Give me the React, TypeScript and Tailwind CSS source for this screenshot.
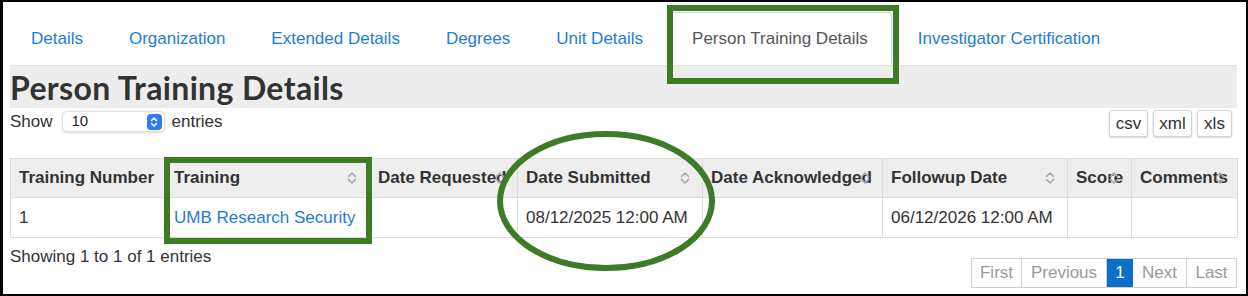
import React from "react";

const GREEN = "#3e7b27";

const SortIcon = () => (
  <svg
    width="12"
    height="16"
    viewBox="0 0 12 16"
    className="absolute right-[11px] top-1/2 -translate-y-1/2"
  >
    <path d="M2.5 6.5 L6 3 L9.5 6.5" fill="none" stroke="#aaaaaa" strokeWidth="1.7" strokeLinecap="round" strokeLinejoin="round" />
    <path d="M2.5 9.5 L6 13 L9.5 9.5" fill="none" stroke="#aaaaaa" strokeWidth="1.7" strokeLinecap="round" strokeLinejoin="round" />
  </svg>
);

const tabs = ["Details", "Organization", "Extended Details", "Degrees", "Unit Details"];

const cols: { label: string; w: string }[] = [
  { label: "Training Number", w: "w-[155px]" },
  { label: "Training", w: "w-[204px]" },
  { label: "Date Requested", w: "w-[148px]" },
  { label: "Date Submitted", w: "w-[185px]" },
  { label: "Date Acknowledged", w: "w-[180px]" },
  { label: "Followup Date", w: "w-[185px]" },
  { label: "Score", w: "w-[64px]" },
  { label: "Comments", w: "w-[106px]" },
];

export default function App() {
  return (
    <div
      className="relative w-[1248px] h-[296px] overflow-hidden bg-white border-black border-t-2 border-r-2 border-b-2 border-l-[3px] box-border pl-[7px] pr-[9px] pt-[10px] text-[#333]"
      style={{ fontFamily: '"Liberation Sans", Arial, sans-serif' }}
    >
      {/* Tabs */}
      <div className="flex h-[53px] items-stretch">
        {tabs.map((t) => (
          <div key={t} className="flex items-center pl-[21px] pr-[23px] mr-[2px] text-[17px] text-[#1f7bd6]">
            {t}
          </div>
        ))}
        <div className="flex items-center pl-[23px] pr-[23px] mr-[2px] text-[17px] text-[#555] bg-white border border-b-0 border-[#cdd9ea] rounded-t-[3px]">
          Person Training Details
        </div>
        <div className="flex items-center pl-[24px] pr-[22px] text-[17px] text-[#1f7bd6]">
          Investigator Certification
        </div>
      </div>

      {/* Heading band */}
      <div className="h-[43px] bg-[#ededed] border-t border-[#e2e2e2] flex items-center">
        <h1
          className="text-[32px] leading-none font-bold tracking-[0.35px] text-[#333] mt-[1px]"
          style={{ fontFamily: 'Lato, "Noto Sans", sans-serif' }}
        >
          Person Training Details
        </h1>
      </div>

      {/* Show entries + export buttons */}
      <div className="flex justify-between items-start mt-[2px]">
        <div className="flex items-center h-[23px] text-[17px]">
          <span>Show</span>
          <div className="ml-[9px] w-[103px] h-[21px] bg-white rounded-[5px] border border-[#e0e0e0] shadow-[0_1px_2px_rgba(0,0,0,0.15)] flex items-center justify-between pl-[9px] pr-[2px]">
            <span className="text-[15px] text-[#222]">10</span>
            <span className="w-[15px] h-[16px] rounded-[4px] bg-[#2f7cf6] flex items-center justify-center">
              <svg width="8" height="12" viewBox="0 0 8 12">
                <path d="M1.5 4.5 L4 2 L6.5 4.5" fill="none" stroke="white" strokeWidth="1.5" strokeLinecap="round" strokeLinejoin="round" />
                <path d="M1.5 7.5 L4 10 L6.5 7.5" fill="none" stroke="white" strokeWidth="1.5" strokeLinecap="round" strokeLinejoin="round" />
              </svg>
            </span>
          </div>
          <span className="ml-[7px]">entries</span>
        </div>
        <div className="flex gap-[5px] mr-[5px]">
          {[
            ["csv", "w-[39px]"],
            ["xml", "w-[39px]"],
            ["xls", "w-[35px]"],
          ].map(([b, w]) => (
            <div
              key={b}
              className={`${w} h-[27px] flex items-center justify-center text-[17px] bg-white border border-[#d2d2d2] rounded-[3px] shadow-[0_1px_2px_rgba(0,0,0,0.18)]`}
            >
              {b}
            </div>
          ))}
        </div>
      </div>

      {/* Table */}
      <table className="mt-[21px] border-collapse table-fixed w-[1227px]">
        <thead>
          <tr className="bg-[#eeeeee] h-[39px]">
            {cols.map((c, i) => (
              <th
                key={c.label}
                className={`${c.w} relative text-left font-bold text-[17px] pl-[8px] pr-0 border border-[#dcdcdc] whitespace-nowrap overflow-visible`}
              >
                {c.label}
                {i > 0 && <SortIcon />}
              </th>
            ))}
          </tr>
        </thead>
        <tbody>
          <tr className="h-[40px] text-[17px]">
            <td className="pl-[8px] border border-[#dcdcdc]">1</td>
            <td className="pl-[8px] border border-[#dcdcdc] text-[#1f7bd6] whitespace-nowrap">UMB Research Security</td>
            <td className="border border-[#dcdcdc]"></td>
            <td className="pl-[8px] border border-[#dcdcdc] whitespace-nowrap">08/12/2025 12:00 AM</td>
            <td className="border border-[#dcdcdc]"></td>
            <td className="pl-[8px] border border-[#dcdcdc] whitespace-nowrap">06/12/2026 12:00 AM</td>
            <td className="border border-[#dcdcdc]"></td>
            <td className="border border-[#dcdcdc]"></td>
          </tr>
        </tbody>
      </table>

      {/* Footer */}
      <div className="flex justify-between items-start mt-[9px]">
        <span className="text-[17px] leading-[20px]">Showing 1 to 1 of 1 entries</span>
        <div className="mt-[11px] flex h-[30px] border border-[#cfcfcf] text-[17px] text-[#9a9a9a]">
          <div className="w-[50px] flex items-center justify-center border-r border-[#cfcfcf]">First</div>
          <div className="w-[85px] flex items-center justify-center border-r border-[#cfcfcf]">Previous</div>
          <div className="w-[26px] flex items-center justify-center bg-[#0b6ec8] text-white">1</div>
          <div className="w-[54px] flex items-center justify-center border-r border-[#cfcfcf]">Next</div>
          <div className="w-[49px] flex items-center justify-center">Last</div>
        </div>
      </div>

      {/* Annotations */}
      <svg
        width="1248"
        height="296"
        className="absolute left-[-3px] top-[-2px] pointer-events-none"
      >
        <rect x="670" y="8" width="226" height="73" fill="none" stroke={GREEN} strokeWidth="6" />
        <rect x="167" y="160" width="202" height="81" fill="none" stroke={GREEN} strokeWidth="6" />
        <ellipse cx="606" cy="201" rx="106" ry="67" fill="none" stroke={GREEN} strokeWidth="6" />
      </svg>
    </div>
  );
}
